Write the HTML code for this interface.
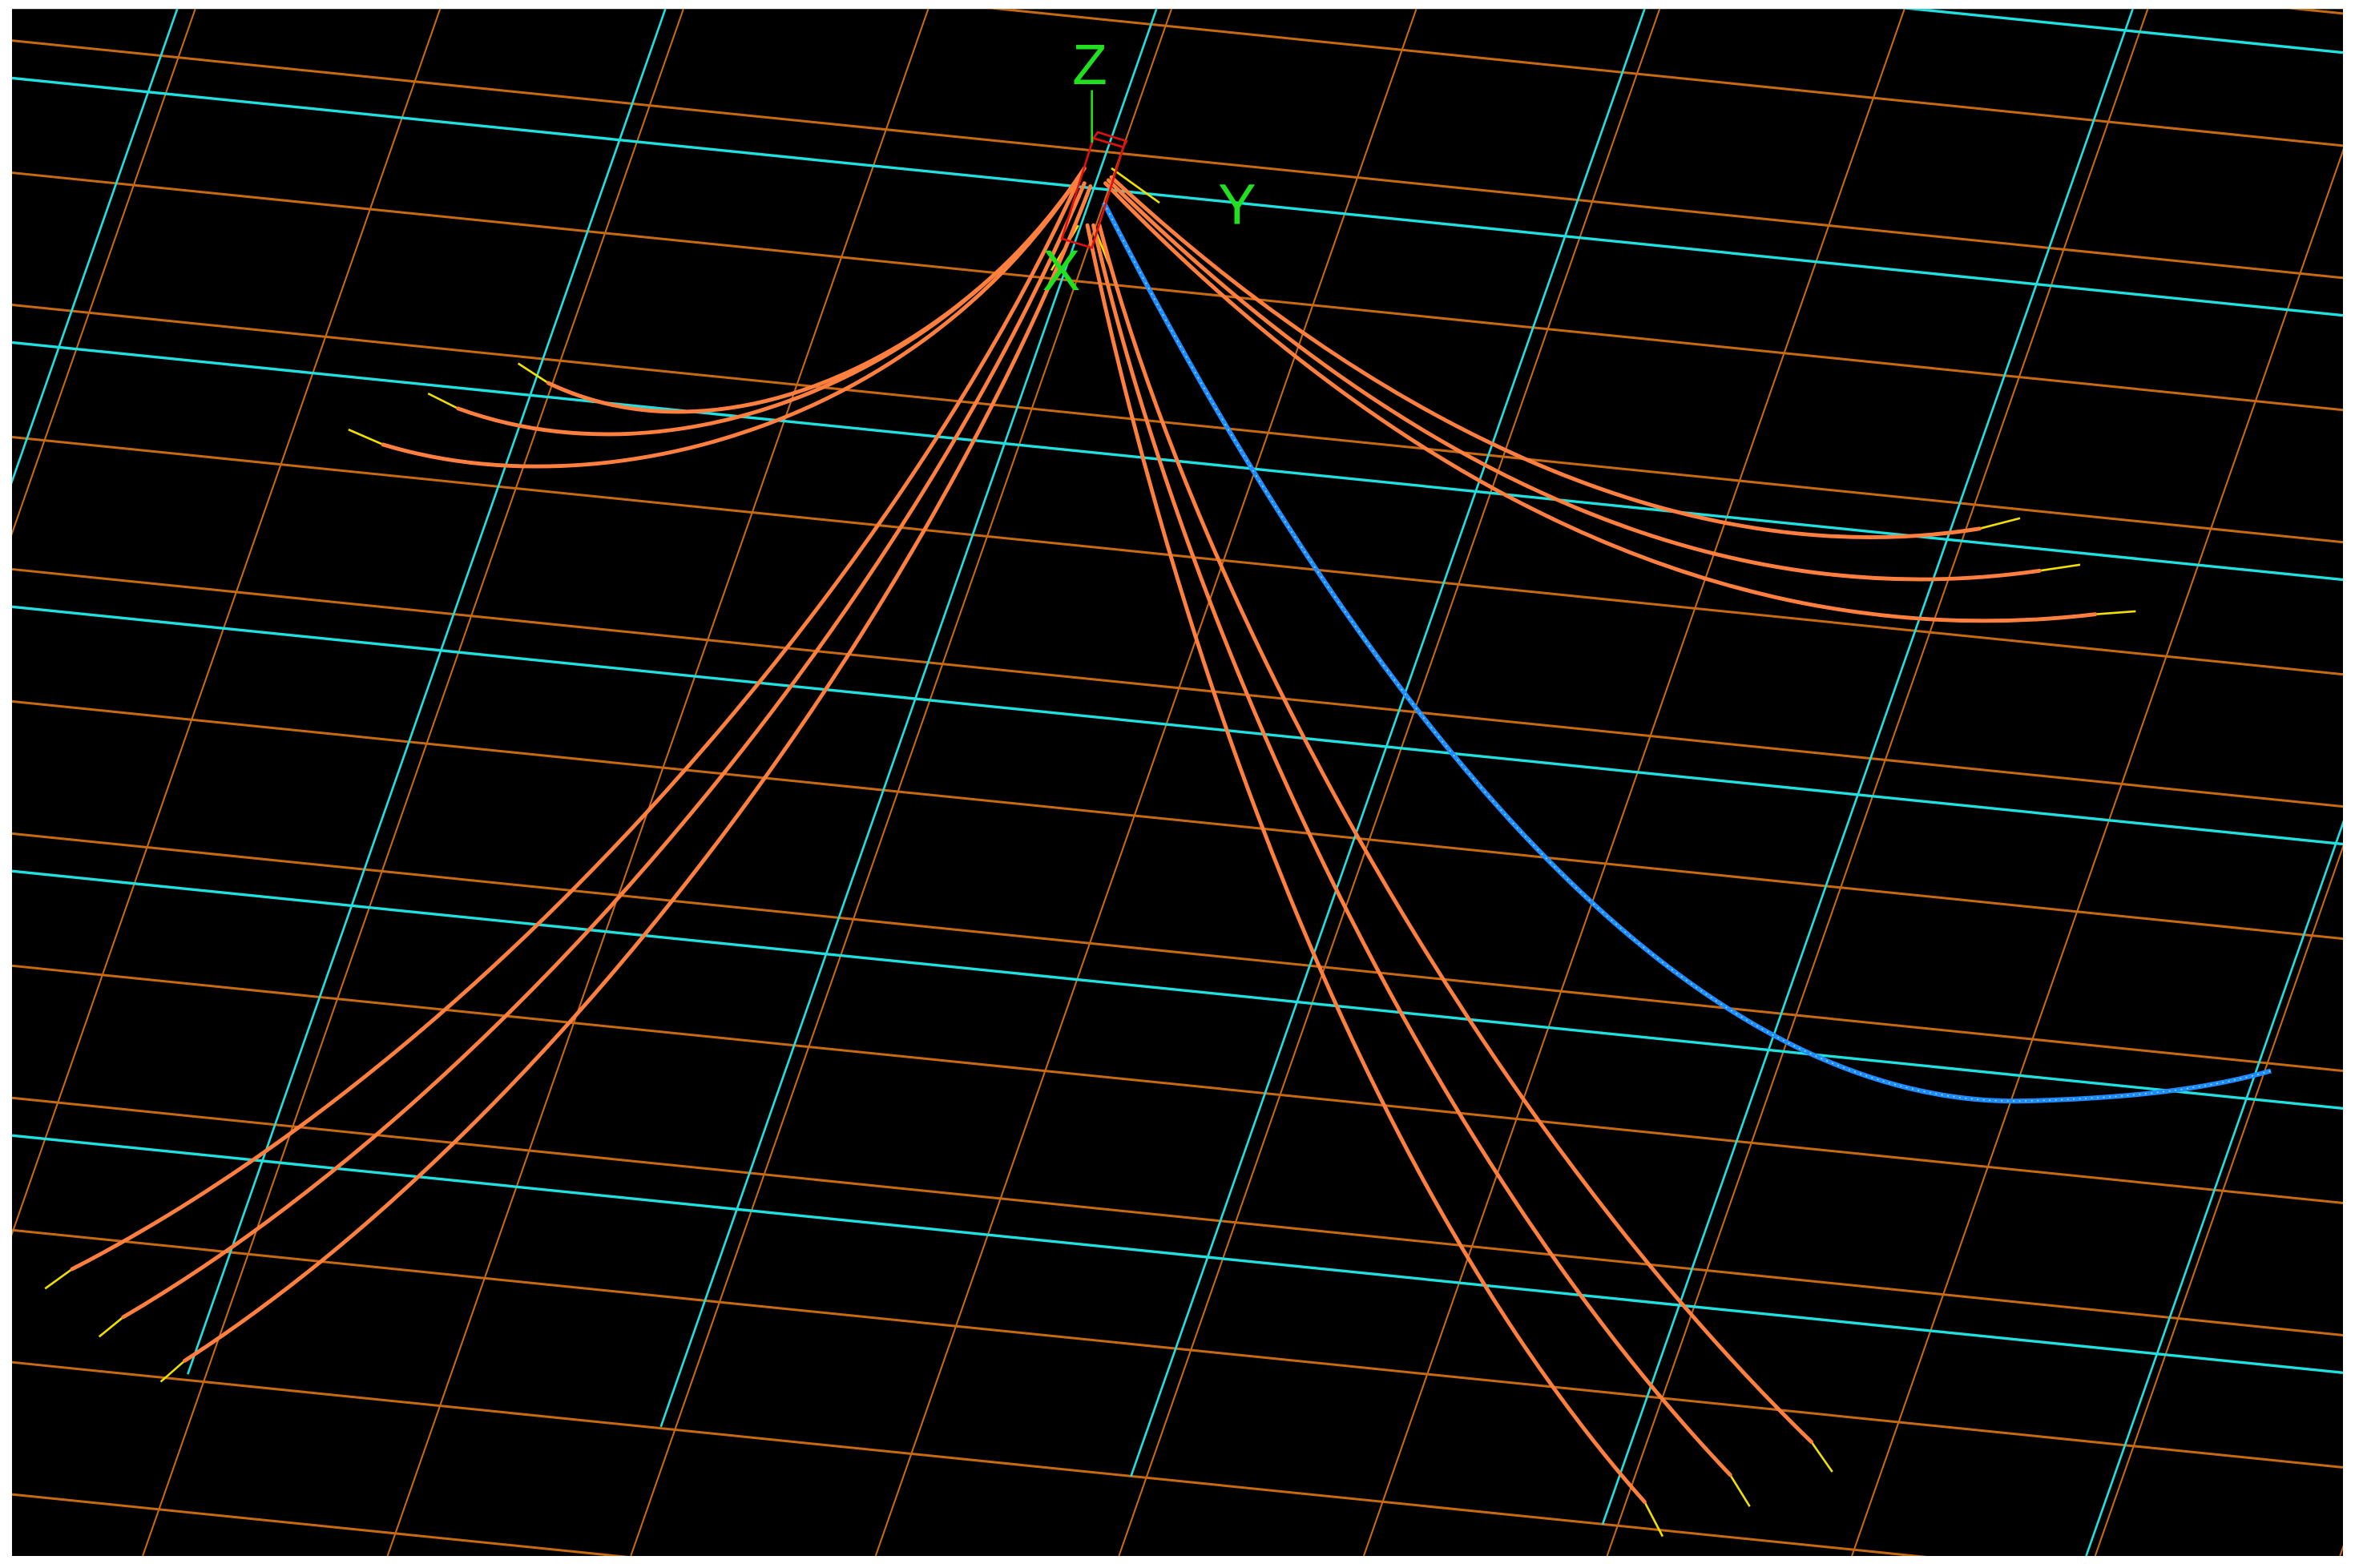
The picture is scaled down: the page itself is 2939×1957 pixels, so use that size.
<!DOCTYPE html>
<html><head><meta charset="utf-8"><style>
html,body{margin:0;padding:0;background:#fff;width:2939px;height:1957px;overflow:hidden;}
svg{display:block;}
</style></head><body>
<svg width="2939" height="1957" viewBox="0 0 1568 1044" preserveAspectRatio="none" xmlns="http://www.w3.org/2000/svg">
<defs><clipPath id="c"><rect x="8" y="6" width="1552" height="1030"/></clipPath></defs>
<rect x="0" y="0" width="1568" height="1044" fill="#fff"/>
<rect x="8" y="6" width="1552" height="1030" fill="#000"/>
<g clip-path="url(#c)">
<g stroke="#c86a10" stroke-width="1.6" fill="none">
<line x1="8" y1="-149" x2="1560" y2="9"/>
<line x1="8" y1="-61" x2="1560" y2="97"/>
<line x1="8" y1="27" x2="1560" y2="185"/>
<line x1="8" y1="115" x2="1560" y2="273"/>
<line x1="8" y1="203" x2="1560" y2="361"/>
<line x1="8" y1="291" x2="1560" y2="449"/>
<line x1="8" y1="379" x2="1560" y2="537"/>
<line x1="8" y1="467" x2="1560" y2="625"/>
<line x1="8" y1="555" x2="1560" y2="713"/>
<line x1="8" y1="643" x2="1560" y2="801"/>
<line x1="8" y1="731" x2="1560" y2="889"/>
<line x1="8" y1="819" x2="1560" y2="977"/>
<line x1="8" y1="907" x2="1560" y2="1065"/>
<line x1="8" y1="995" x2="1560" y2="1153"/>
</g>
<g stroke="#c86a10" stroke-width="1.1" fill="none">
<line x1="130" y1="6" x2="-230" y2="1036"/>
<line x1="293" y1="6" x2="-67" y2="1036"/>
<line x1="455" y1="6" x2="95" y2="1036"/>
<line x1="618" y1="6" x2="258" y2="1036"/>
<line x1="780" y1="6" x2="420" y2="1036"/>
<line x1="943" y1="6" x2="583" y2="1036"/>
<line x1="1105" y1="6" x2="745" y2="1036"/>
<line x1="1268" y1="6" x2="908" y2="1036"/>
<line x1="1430" y1="6" x2="1070" y2="1036"/>
<line x1="1593" y1="6" x2="1233" y2="1036"/>
<line x1="1755" y1="6" x2="1395" y2="1036"/>
<line x1="1918" y1="6" x2="1558" y2="1036"/>
</g>
<g stroke="#20e0e0" stroke-width="1.8" fill="none">
<line x1="8" y1="-123" x2="1560" y2="35"/>
<line x1="8" y1="52" x2="1560" y2="210"/>
<line x1="8" y1="228" x2="1560" y2="386"/>
<line x1="8" y1="404" x2="1560" y2="562"/>
<line x1="8" y1="580" x2="1560" y2="738"/>
<line x1="8" y1="756" x2="1560" y2="914"/>
</g>
<g stroke="#20e0e0" stroke-width="1.4" fill="none">
<line x1="118" y1="6" x2="-200" y2="915"/>
<line x1="443" y1="6" x2="125" y2="915"/>
<line x1="770" y1="6" x2="440" y2="950"/>
<line x1="1095" y1="6" x2="753" y2="983"/>
<line x1="1420" y1="6" x2="1067" y2="1015"/>
<line x1="1750" y1="6" x2="1389" y2="1036"/>
</g>
<g stroke="#f0e000" stroke-width="1.4" fill="none">
<line x1="345" y1="242" x2="365" y2="255"/>
<line x1="285" y1="262" x2="305" y2="272"/>
<line x1="232" y1="286" x2="255" y2="296"/>
<line x1="1345" y1="345" x2="1318" y2="352"/>
<line x1="1385" y1="376" x2="1358" y2="380"/>
<line x1="1422" y1="407" x2="1395" y2="409"/>
<line x1="30" y1="858" x2="48" y2="845"/>
<line x1="66" y1="890" x2="82" y2="877"/>
<line x1="107" y1="920" x2="123" y2="906"/>
<line x1="1107" y1="1023" x2="1095" y2="1000"/>
<line x1="1165" y1="1003" x2="1152" y2="982"/>
<line x1="1220" y1="980" x2="1206" y2="960"/>
<line x1="740" y1="112" x2="772" y2="135"/>
<line x1="718" y1="150" x2="700" y2="180"/>
<line x1="728" y1="150" x2="742" y2="185"/>
</g>
<g stroke="#ff7f3f" stroke-width="2.6" fill="none" stroke-linecap="round">
<path d="M722,112 C650,225 490,315 365,255"/>
<path d="M720,115 C630,250 450,325 305,272"/>
<path d="M718,118 C610,285 400,340 255,296"/>
<path d="M740,118 C860,230 1080,390 1318,352"/>
<path d="M738,120 C860,240 1080,420 1358,380"/>
<path d="M736,122 C860,250 1090,445 1395,409"/>
<path d="M718,120 C600,380 330,700 48,845"/>
<path d="M722,122 C610,390 350,720 82,877"/>
<path d="M726,124 C620,400 380,740 123,906"/>
<path d="M724,150 C780,420 900,780 1095,1000"/>
<path d="M728,150 C790,420 950,770 1152,982"/>
<path d="M732,150 C800,410 990,750 1206,960"/>
</g>
<path d="M735,135 C880,420 1100,740 1350,733 C1420,731 1470,725 1512,713" stroke="#1e8cff" stroke-width="3.2" fill="none"/>
<path d="M735,135 C880,420 1100,740 1350,733 C1420,731 1470,725 1512,713" stroke="#9fe0ff" stroke-width="0.8" stroke-dasharray="1 3" fill="none"/>
<g stroke="#e01010" stroke-width="1.4" fill="none">
<polygon points="728,92 748,98 727,165 707,159"/>
<polygon points="731,88 750,94 748,98 728,92"/>
</g>
<line x1="727" y1="60" x2="727" y2="95" stroke="#20e020" stroke-width="1.4"/>
<g fill="#20e020" font-family="Liberation Sans, sans-serif" font-size="38">
<text x="714" y="56">Z</text>
<text x="811" y="149">Y</text>
<text x="694" y="193">X</text>
</g>
</g>
</svg>
</body></html>
